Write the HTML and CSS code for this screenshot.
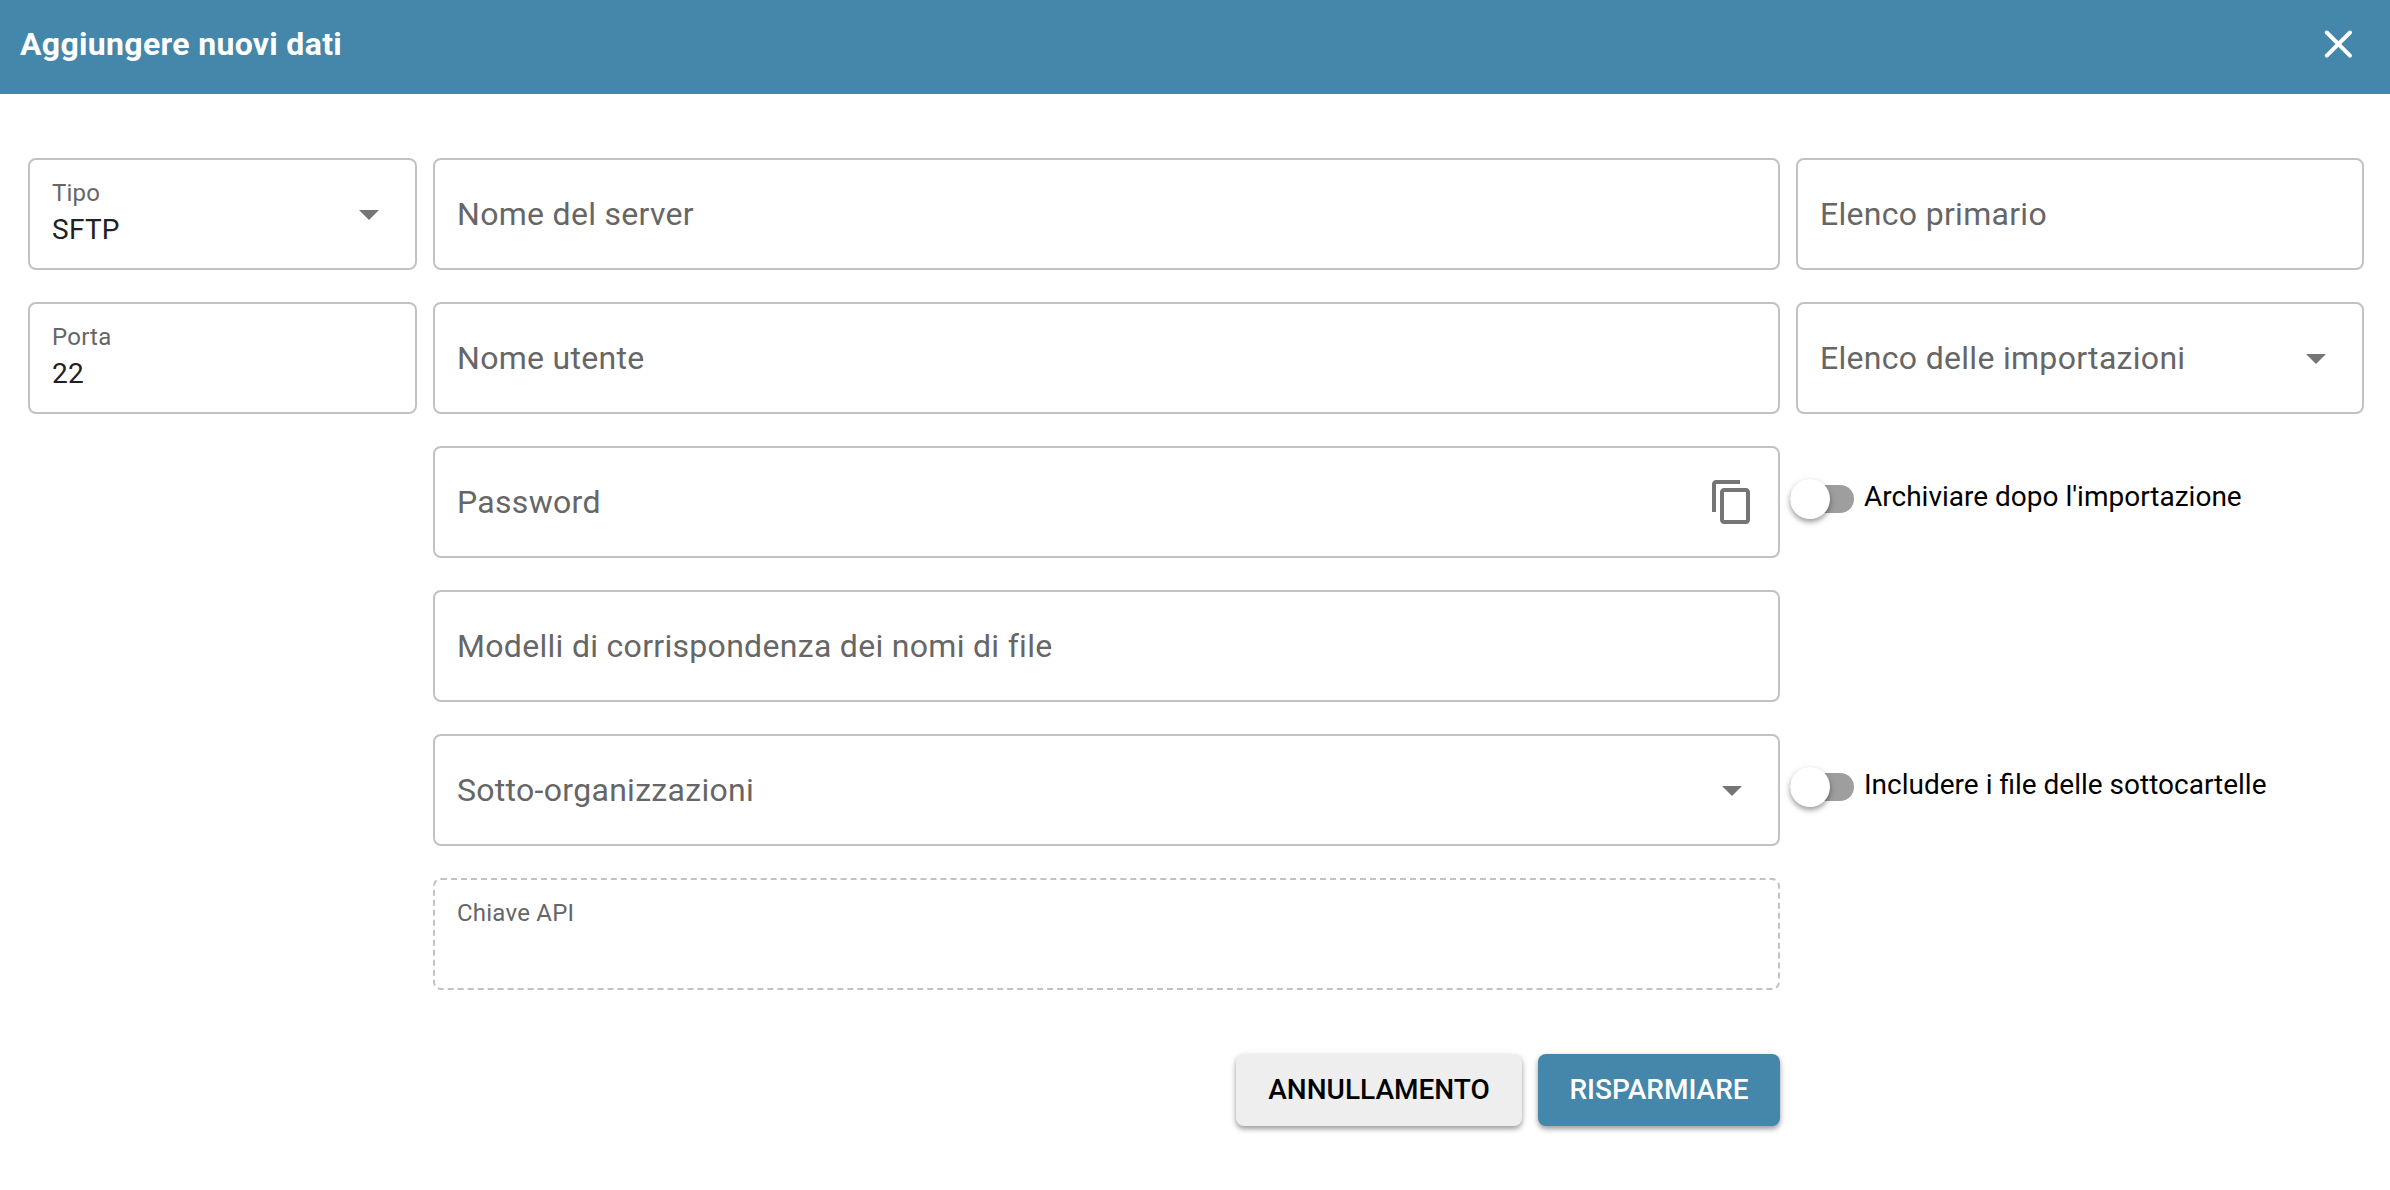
FILE: index.html
```html
<!DOCTYPE html>
<html lang="it">
<head>
<meta charset="utf-8">
<title>Aggiungere nuovi dati</title>
<link rel="stylesheet" href="styles.css">
</head>
<body>
<header class="dialog-header">
  <h1 class="title">Aggiungere nuovi dati</h1>
  <button class="close" type="button" aria-label="Chiudi">
    <svg width="32" height="32" viewBox="0 0 32 32"><path d="M4.800 4.500 28 27.700M28 4.500 4.800 27.700"/></svg>
  </button>
</header>
<main class="form">
  <div class="column">
    <div class="field filled">
      <div class="text"><span class="caption">Tipo</span><span class="value">SFTP</span></div>
      <span class="arrow"></span>
    </div>
    <div class="field filled">
      <div class="text"><span class="caption">Porta</span><span class="value">22</span></div>
    </div>
  </div>
  <div class="column">
    <div class="field"><span class="label">Nome del server</span></div>
    <div class="field"><span class="label">Nome utente</span></div>
    <div class="field with-icon">
      <span class="label">Password</span>
      <svg class="copy" width="48" height="48" viewBox="0 0 24 24"><path d="M16 1H4c-1.100 0-2 .9-2 2v14h2V3h12V1zm3 4H8c-1.100 0-2 .9-2 2v14c0 1.100.9 2 2 2h11c1.100 0 2-.9 2-2V7c0-1.100-.9-2-2-2zm0 16H8V7h11v14z"/></svg>
    </div>
    <div class="field"><span class="label">Modelli di corrispondenza dei nomi di file</span></div>
    <div class="field"><span class="label">Sotto-organizzazioni</span><span class="arrow"></span></div>
    <div class="field filled disabled">
      <div class="text"><span class="caption">Chiave API</span></div>
    </div>
    <div class="actions">
      <button class="btn cancel" type="button">ANNULLAMENTO</button>
      <button class="btn primary" type="button">RISPARMIARE</button>
    </div>
  </div>
  <div class="column">
    <div class="field"><span class="label">Elenco primario</span></div>
    <div class="field"><span class="label">Elenco delle importazioni</span><span class="arrow"></span></div>
    <div class="toggle"><span class="track"><span class="thumb"></span></span><span class="toggle-label">Archiviare dopo l'importazione</span></div>
    <div class="spacer"></div>
    <div class="toggle"><span class="track"><span class="thumb"></span></span><span class="toggle-label">Includere i file delle sottocartelle</span></div>
  </div>
</main>
</body>
</html>
```
FILE: styles.css
```css
* { box-sizing: border-box; }

body {
  margin: 0;
  min-height: 1190px;
  background: #fff;
  font-family: Roboto, "Liberation Sans", sans-serif;
  color: #000;
}

.dialog-header {
  display: flex;
  justify-content: space-between;
  align-items: center;
  height: 94px;
  padding: 0 36px 6px 20px;
  background: #4487aa;
  color: #fff;
}

.title {
  margin: 0;
  font-size: 32px;
  line-height: 40px;
  font-weight: 700;
  letter-spacing: 0.32px;
}

.close {
  display: flex;
  padding: 0;
  border: 0;
  background: none;
}

.close path {
  fill: none;
  stroke: #fff;
  stroke-width: 4;
  stroke-linecap: round;
}

.form {
  display: grid;
  grid-template-columns: 389px 1347px 568px;
  gap: 16px;
  padding: 64px 26px 0 28px;
}

.column {
  display: flex;
  flex-direction: column;
  gap: 32px;
}

.field {
  display: flex;
  justify-content: space-between;
  align-items: center;
  height: 112px;
  padding: 0 36px 0 22px;
  border: 2px solid #c2c2c2;
  border-radius: 8px;
}

.field.with-icon { padding-right: 22px; }
.field.disabled { border-style: dashed; }

.label {
  font-size: 32px;
  line-height: 40px;
  letter-spacing: 0.009375em;
  color: #666;
}

.text {
  display: flex;
  flex-direction: column;
  align-self: flex-start;
  padding-top: 17px;
}

.caption {
  font-size: 24px;
  line-height: 32px;
  letter-spacing: 0.009375em;
  color: #666;
}

.value {
  font-size: 28px;
  line-height: 42px;
  letter-spacing: 0.009375em;
  color: #212121;
}

.arrow {
  margin-top: 2px;
  border: 10px solid transparent;
  border-top-color: #757575;
  border-bottom: 0;
}

.copy { fill: #757575; }

.toggle {
  display: flex;
  align-items: center;
  height: 112px;
  padding-bottom: 7px;
  margin-left: -6px;
}

.track {
  display: flex;
  align-items: center;
  width: 64px;
  height: 28px;
  border-radius: 14px;
  margin-top: 1px;
  background: #9e9e9e;
}

.thumb {
  width: 40px;
  height: 40px;
  flex: none;
  border-radius: 50%;
  background: #fff;
  box-shadow: 0 3px 5px rgba(0,0,0,.34), 0 2px 10px rgba(0,0,0,.08);
}

.toggle-label {
  margin: 0 0 3px 10px;
  font-size: 28px;
  line-height: 40px;
}

.spacer { height: 112px; }

.actions {
  display: flex;
  justify-content: flex-end;
  gap: 16px;
  padding-top: 32px;
}

.btn {
  width: 242px;
  height: 72px;
  padding: 0;
  border: 0;
  border-radius: 8px;
  background: #eee;
  color: #000;
  font: 500 28px/72px Roboto, "Liberation Sans", sans-serif;
  box-shadow: 0 3px 5px rgba(0,0,0,.34), 0 2px 10px rgba(0,0,0,.08);
}

.btn.cancel { width: 286px; }

.btn.primary {
  background: #4487aa;
  color: #fff;
}
```
